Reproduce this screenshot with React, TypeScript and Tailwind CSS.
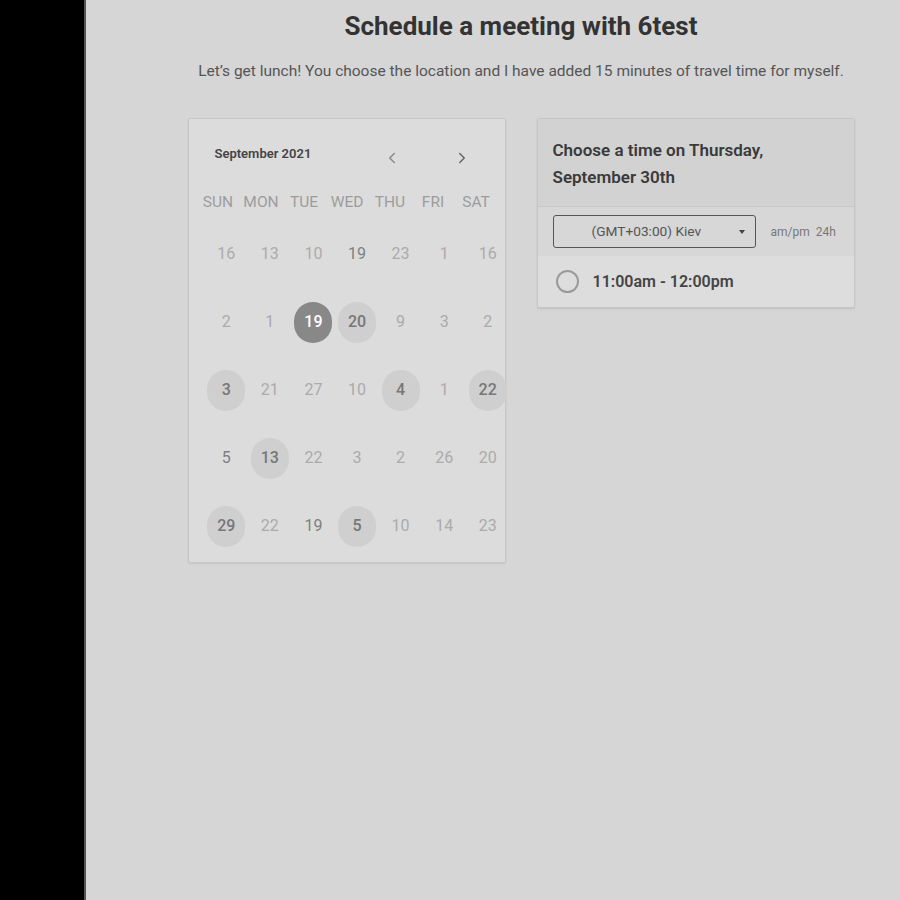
import { ChevronLeft, ChevronRight } from 'lucide-react';

type Day = { n: number; kind: 'dim' | 'mid' | 'avail' | 'sel' };

const rows: Day[][] = [
  [
    { n: 16, kind: 'dim' },
    { n: 13, kind: 'dim' },
    { n: 10, kind: 'dim' },
    { n: 19, kind: 'mid' },
    { n: 23, kind: 'dim' },
    { n: 1, kind: 'dim' },
    { n: 16, kind: 'dim' },
  ],
  [
    { n: 2, kind: 'dim' },
    { n: 1, kind: 'dim' },
    { n: 19, kind: 'sel' },
    { n: 20, kind: 'avail' },
    { n: 9, kind: 'dim' },
    { n: 3, kind: 'dim' },
    { n: 2, kind: 'dim' },
  ],
  [
    { n: 3, kind: 'avail' },
    { n: 21, kind: 'dim' },
    { n: 27, kind: 'dim' },
    { n: 10, kind: 'dim' },
    { n: 4, kind: 'avail' },
    { n: 1, kind: 'dim' },
    { n: 22, kind: 'avail' },
  ],
  [
    { n: 5, kind: 'mid' },
    { n: 13, kind: 'avail' },
    { n: 22, kind: 'dim' },
    { n: 3, kind: 'dim' },
    { n: 2, kind: 'dim' },
    { n: 26, kind: 'dim' },
    { n: 20, kind: 'dim' },
  ],
  [
    { n: 29, kind: 'avail' },
    { n: 22, kind: 'dim' },
    { n: 19, kind: 'mid' },
    { n: 5, kind: 'avail' },
    { n: 10, kind: 'dim' },
    { n: 14, kind: 'dim' },
    { n: 23, kind: 'dim' },
  ],
];

const weekdays = ['SUN', 'MON', 'TUE', 'WED', 'THU', 'FRI', 'SAT'];

function DayCell({ day }: { day: Day }) {
  if (day.kind === 'sel') {
    return (
      <div className="w-[38px] h-[41px] rounded-full bg-[#888888] text-white font-medium flex items-center justify-center text-[16px]">
        {day.n}
      </div>
    );
  }
  if (day.kind === 'avail') {
    return (
      <div className="w-[38px] h-[41px] rounded-full bg-[#cfcfcf] text-[#777777] font-medium flex items-center justify-center text-[16px]">
        {day.n}
      </div>
    );
  }
  return (
    <div
      className={
        day.kind === 'mid'
          ? 'text-[16px] text-[#808080]'
          : 'text-[16px] text-[#ababab]'
      }
    >
      {day.n}
    </div>
  );
}

export default function App() {
  return (
    <div className="flex min-h-[900px] w-full font-['Roboto',sans-serif]">
      {/* Sidebar strip */}
      <div className="w-[86px] shrink-0 bg-black border-r-2 border-[#555]" />

      <main className="flex-1 bg-[#d6d6d6] pl-[56px]">
        <div className="flex flex-col items-center">
          <h1 className="mt-[11px] text-[26px] leading-[30px] font-bold text-[#333333]">
            Schedule a meeting with 6test
          </h1>
          <p className="mt-[20px] text-[15.5px] leading-[20px] text-[#555555]">
            Let’s get lunch! You choose the location and I have added 15 minutes of travel time for myself.
          </p>

          <div className="mt-[37px] flex gap-[31px] items-start">
            {/* Calendar */}
            <div className="w-[318px] h-[445px] bg-[#dcdcdc] border border-[#c6c6c6] rounded-[2px] shadow-[0_1px_2px_rgba(0,0,0,0.08)]">
              <div className="flex items-center h-[70px] pl-[26px] pr-[34px]">
                <span className="text-[13px] font-semibold text-[#444444]">September 2021</span>
                <div className="ml-auto flex items-center gap-[52px] mt-[8px] text-[#8a8a8a]">
                  <ChevronLeft className="w-[18px] h-[18px]" strokeWidth={2} />
                  <ChevronRight className="w-[18px] h-[18px] text-[#666666]" strokeWidth={2} />
                </div>
              </div>
              <div className="grid grid-cols-7 w-[301px] ml-[8px] mt-[2px]">
                {weekdays.map((w) => (
                  <div key={w} className="text-center text-[15.5px] text-[#9c9c9c] leading-[22px]">
                    {w}
                  </div>
                ))}
              </div>
              <div className="flex flex-col w-[305px] ml-[16px] mt-[7px]">
                {rows.map((r, i) => (
                  <div key={i} className="grid grid-cols-7 h-[68px] items-center">
                    {r.map((d, j) => (
                      <div key={j} className="flex justify-center">
                        <DayCell day={d} />
                      </div>
                    ))}
                  </div>
                ))}
              </div>
            </div>

            {/* Time picker */}
            <div className="w-[318px] bg-[#dcdcdc] border border-[#c6c6c6] rounded-[2px] shadow-[0_1px_2px_rgba(0,0,0,0.1)] overflow-hidden">
              <div className="bg-[#d2d2d2] border-b border-[#c8c8c8] px-[15px] pt-[18px] pb-[15px]">
                <h2 className="text-[17px] leading-[27px] font-semibold text-[#3a3a3a]">
                  Choose a time on Thursday,
                  <br />
                  September 30th
                </h2>
              </div>
              <div className="bg-[#d7d7d7] flex items-center px-[15px] h-[49px]">
                <div className="w-[203px] h-[33px] border border-[#555555] rounded-[3px] flex items-center pl-[38px] pr-[10px] text-[13.7px] text-[#555555]">
                  <span>(GMT+03:00) Kiev</span>
                  <span className="ml-auto w-0 h-0 border-l-[3.5px] border-r-[3.5px] border-t-[4px] border-l-transparent border-r-transparent border-t-[#444444]" />
                </div>
                <span className="ml-[15px] text-[12px] text-[#777777]">am/pm&nbsp;&nbsp;24h</span>
              </div>
              <div className="bg-[#dddddd] flex items-center px-[18px] h-[51px]">
                <div className="w-[23px] h-[23px] rounded-full border-2 border-[#9a9a9a]" />
                <span className="ml-[14px] text-[16px] font-semibold text-[#444444]">11:00am - 12:00pm</span>
              </div>
            </div>
          </div>
        </div>
      </main>
    </div>
  );
}
